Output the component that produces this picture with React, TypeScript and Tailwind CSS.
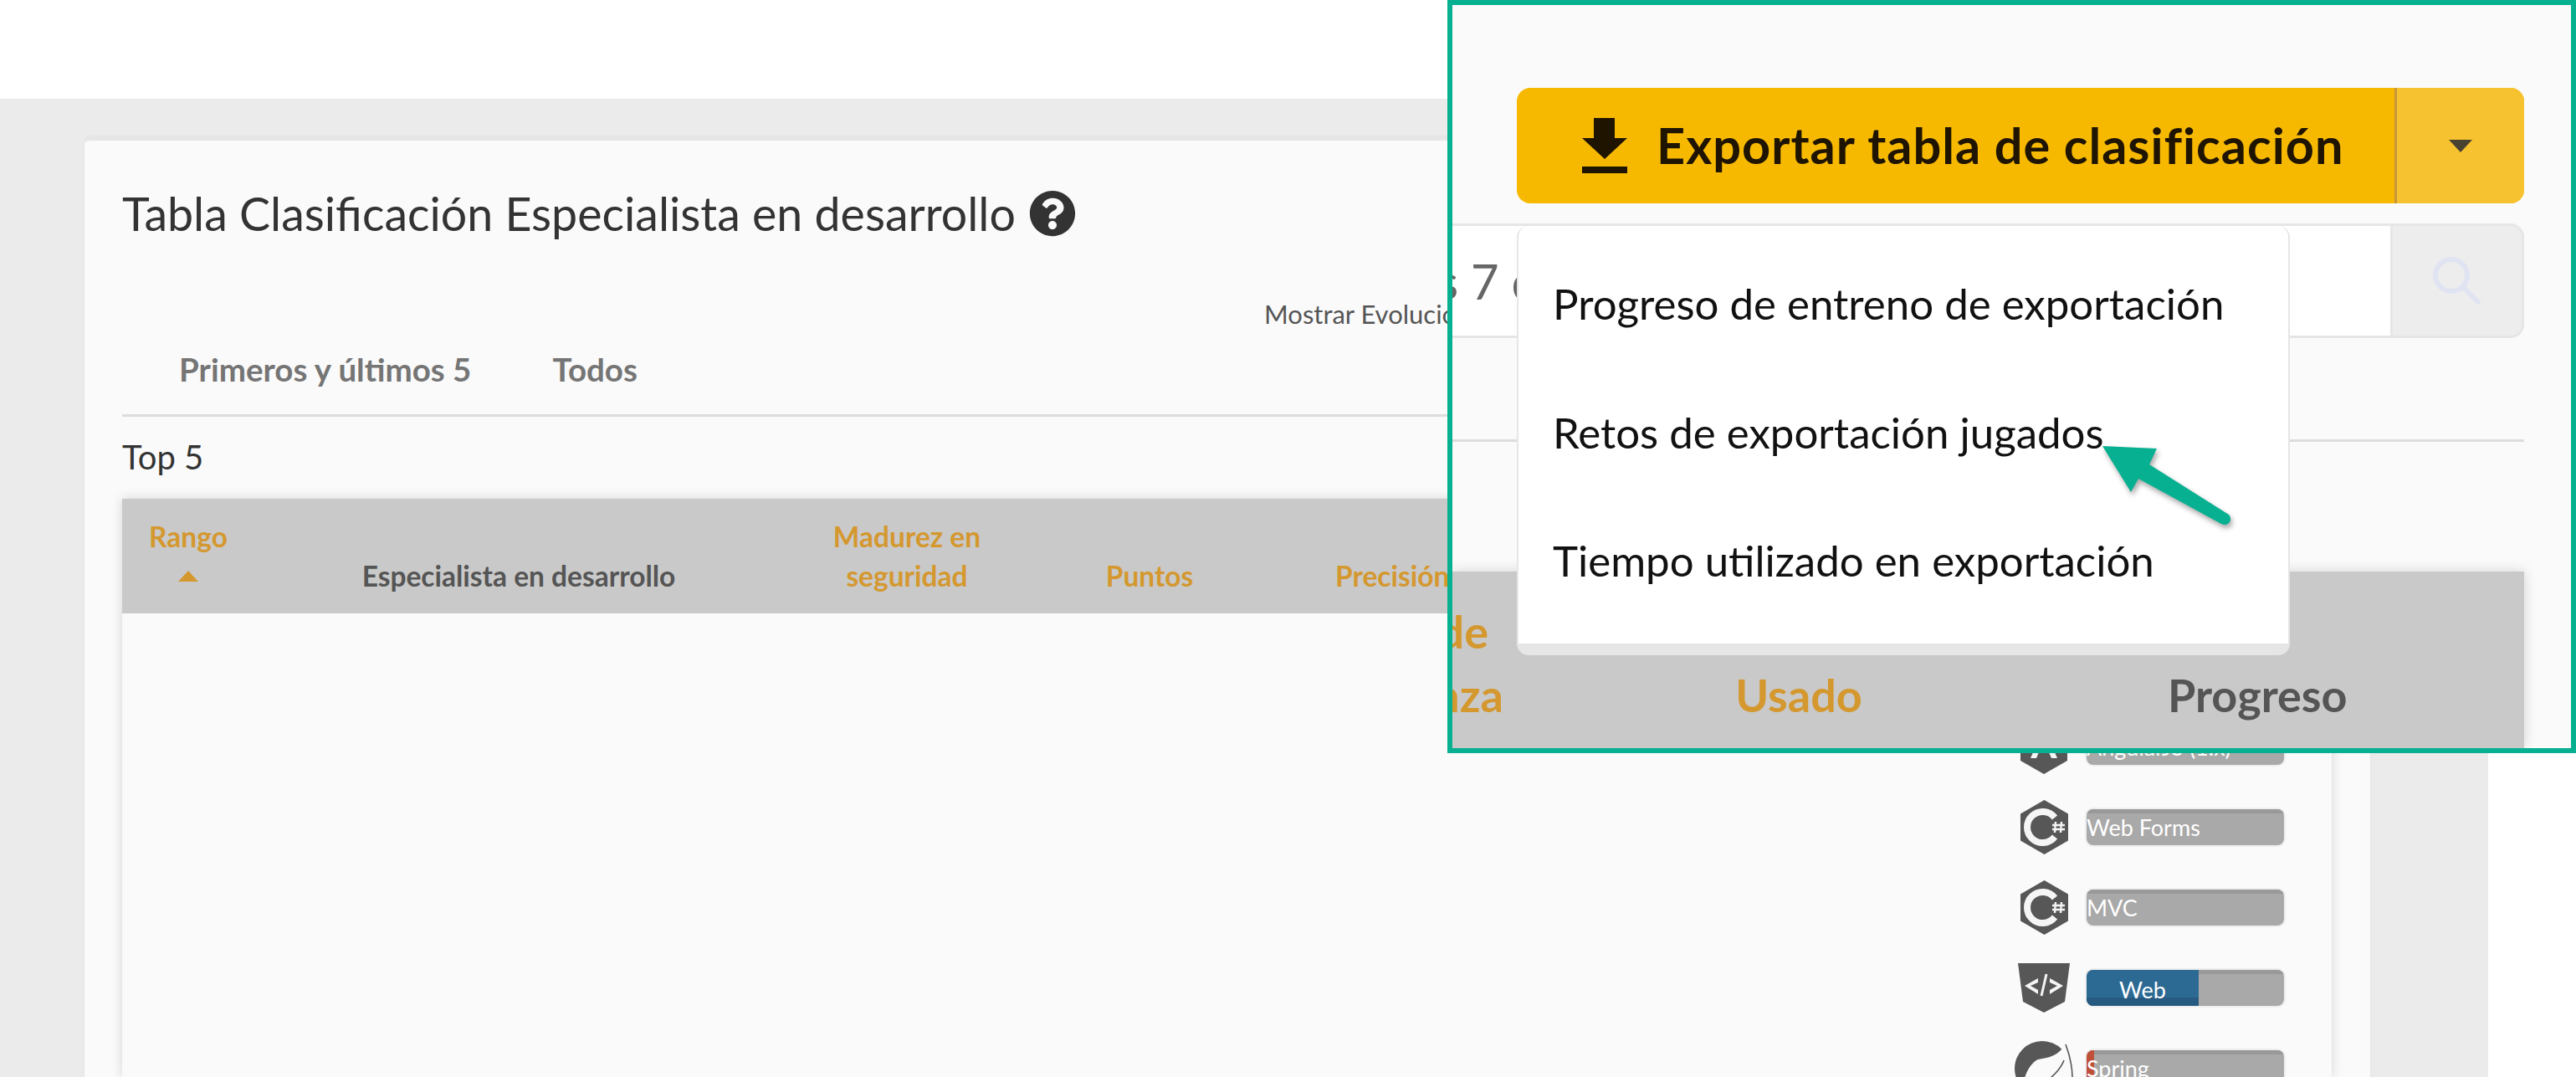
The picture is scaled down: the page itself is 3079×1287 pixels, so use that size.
import React from 'react';
import { FaQuestionCircle } from 'react-icons/fa';

const skills = [
    { name: 'AngularJS (1.x)', icon: 'angular', done: 0 },
    { name: 'Web Forms', icon: 'csharp', done: 0 },
    { name: 'MVC', icon: 'csharp', done: 0 },
    { name: 'Web', icon: 'html', done: 134 },
    { name: 'Spring', icon: 'spring', done: 9 },
];

const SkillIcon = ({ kind }: { kind: string }) => {
    if (kind === 'html') {
        return (
            <svg viewBox="0 0 62 60" className="h-[60px] w-[62px]">
                <path d="M0 0H62L56 46L31 59L6 46Z" fill="#575757" />
                <path d="M8 27L24 18V23L15 27L24 32V37ZM54 27L38 18V23L47 27L38 32V37Z" fill="#f5f5f5" />
                <path d="M34 13L28 39" fill="none" stroke="#f5f5f5" strokeWidth="3" />
            </svg>
        );
    }
    if (kind === 'spring') {
        return (
            <svg viewBox="0 0 70 68" className="h-[68px] w-[70px]">
                <circle cx="33" cy="34" r="33" fill="#575757" />
                <path d="M8 70C9 50 14 32 26 24C34 20 48 24 61 5C71 30 70 60 50 70Z" fill="#fafafa" />
                <path d="M61 5C66 18 69 32 69 46" fill="none" stroke="#575757" strokeWidth="1.6" />
                <path d="M59 24C56 32 50 39 43 45" fill="none" stroke="#575757" strokeWidth="1.6" />
            </svg>
        );
    }
    if (kind === 'angular') {
        return (
            <svg viewBox="0 0 56 65" className="h-[65px] w-[56px]">
                <path d="M28 0L56 16V49L28 65L0 49V16Z" fill="#575757" />
                <path d="M28 9L12 46H19L28 25L37 46H44Z" fill="#f5f5f5" />
            </svg>
        );
    }
    return (
        <svg viewBox="0 0 57 65" className="h-[65px] w-[57px]">
            <path d="M28.5 0L57 16.5V48.5L28.5 65L0 48.5V16.5Z" fill="#575757" />
            <path d="M41 21A18.5 18.5 0 1 0 41 44" fill="none" stroke="#f5f5f5" strokeWidth="8" />
            <path d="M42 26L41 39M49 26L48 39M38 30H53M38 35H53" fill="none" stroke="#f5f5f5" strokeWidth="2.4" />
        </svg>
    );
};

const SkillRow = ({ name, icon, done }: { name: string; icon: string; done: number }) => (
    <div className="flex h-[47px] items-center justify-end pr-[55px]">
        <div className="mr-[14px] flex w-[70px] justify-center">
            <SkillIcon kind={icon} />
        </div>
        <div className="relative h-[47px] w-[240px] overflow-hidden rounded-[10px] border-2 border-[#eeeeee] bg-[#a9a9a9]">
            <div className="h-[5px] bg-[#999999]" />
            {done > 100 && (
                <div className="absolute top-0 left-0 h-full w-[134px] bg-[#2c6a94]">
                    <div className="absolute bottom-0 left-0 h-[10px] w-full bg-[#265a80]" />
                    <div className="absolute inset-0 flex items-center justify-center pt-[5px] text-[27px] text-white">{name}</div>
                </div>
            )}
            {done > 0 && done < 100 && <div className="absolute top-0 left-0 h-full w-[9px] bg-[#c0503a]" />}
            {done < 100 && (
                <span className="absolute top-[4px] left-0 text-[27px] leading-[36px] whitespace-nowrap text-white">{name}</span>
            )}
        </div>
    </div>
);

const App = () => {
    return (
        <div className="relative h-[1287px] w-[3079px] overflow-hidden bg-white font-['Lato',sans-serif]">
            <div className="mt-[118px] inline-block h-[1169px] w-[2974px] bg-[#ebebeb] pt-[45px] pr-[141px] pl-[101px] align-top">
                <div className="flex h-full flex-col rounded-t-lg border-t-[5px] border-[#e6e6e6] bg-[#fafafa] pr-[46px] pl-[45px] shadow-[0_0_3px_#dddddd]">
                    <div className="mt-[57px] flex h-[60px] items-center text-[55.5px] text-[#333333]">
                        <span className="whitespace-nowrap">Tabla Clasificación Especialista en desarrollo</span>
                        <FaQuestionCircle className="ml-[16px] h-[56px] w-[56px] text-[#333333]" />
                    </div>

                    <div className="mt-[70px] pl-[1365px] text-[31px] leading-[40px] text-[#555555]">Mostrar Evolución</div>

                    <div className="mt-[25px] flex h-[44px] items-center pl-[68px] text-[38.5px] font-bold text-[#757575]">
                        <span>Primeros y últimos 5</span>
                        <span className="ml-[97px]">Todos</span>
                    </div>
                    <div className="mt-[31px] h-[3px] bg-[#dddddd]" />

                    <div className="mt-[28px] text-[40px] leading-[40px] text-[#333333]">Top 5</div>

                    <div className="mt-[30px] flex min-h-0 flex-1 flex-col shadow-[0_0_12px_#d4d4d4]">
                        <div className="grid h-[137px] shrink-0 grid-cols-[158px_632px_296px_284px_1fr] items-end bg-[#c9c9c9] pb-[21px] text-center text-[33.5px] leading-[47px] font-bold text-[#d4982f]">
                            <div>
                                <div>Rango</div>
                                <div className="flex h-[47px] items-center justify-center">
                                    <div className="h-0 w-0 border-x-[12px] border-b-[13px] border-x-transparent border-b-[#d4982f]" />
                                </div>
                            </div>
                            <div className="text-[#555555]">Especialista en desarrollo</div>
                            <div>
                                <div>Madurez en</div>
                                <div>seguridad</div>
                            </div>
                            <div>Puntos</div>
                            <div className="pl-[80px] text-left">Precisión</div>
                        </div>
                        <div className="flex min-h-0 flex-1 flex-col gap-[49px] overflow-hidden pt-[136px]">
                            {skills.map((s) => (
                                <SkillRow key={s.name} name={s.name} icon={s.icon} done={s.done} />
                            ))}
                        </div>
                    </div>
                </div>
            </div>

            {/* zoomed callout over the page */}
            <div className="absolute top-0 right-0 h-[900px] w-[1349px] overflow-hidden border-[6px] border-[#07b091] bg-[#fafafa] pt-[99px] pr-[56px] pl-[77px]">
                <div className="flex h-[138px] rounded-[16px] bg-[#f7b900]">
                    <div className="flex flex-1 items-center pl-[78px]">
                        <svg viewBox="0 0 54 66" className="h-[66px] w-[54px] shrink-0">
                            <path d="M14 0H39V24H54L27 49L0 24H14Z" fill="#1e1400" />
                            <rect x="0" y="58" width="54" height="8" fill="#1e1400" />
                        </svg>
                        <span className="ml-[35px] text-[59.5px] font-bold tracking-[1px] whitespace-nowrap text-[#1e1400]">
                            Exportar tabla de clasificación
                        </span>
                    </div>
                    <div className="flex w-[155px] items-center justify-center rounded-r-[16px] border-l-[3px] border-[#c8963a] bg-[#f6c22f]">
                        <div className="h-0 w-0 border-x-[14px] border-t-[15px] border-x-transparent border-t-[#4a4230]" />
                    </div>
                </div>

                <div className="mt-[24px] -ml-[77px] flex h-[137px]">
                    <div className="flex flex-1 items-center overflow-hidden border-y-[3px] border-[#e6e6e6] bg-white">
                        <span className="-ml-[190px] text-[58px] whitespace-nowrap text-[#666666]">Últimos 7 días</span>
                    </div>
                    <div className="flex w-[160px] items-center justify-center rounded-r-[16px] border-[3px] border-[#e6e6e6] bg-[#ededed]">
                        <svg viewBox="0 0 60 60" className="h-[60px] w-[60px]">
                            <circle cx="23" cy="23" r="19" fill="none" stroke="#e0e4f2" strokeWidth="6" />
                            <path d="M37 37L55 55" fill="none" stroke="#e0e4f2" strokeWidth="6" strokeLinecap="round" />
                        </svg>
                    </div>
                </div>

                <div className="mt-[121px] -ml-[77px] h-[3px] bg-[#dddddd]" />

                <div className="relative mt-[155px] -ml-[77px] h-[211px] bg-[#c9c9c9] text-[54px] leading-[76px] font-bold text-[#d4982f] shadow-[0_0_14px_#d4d4d4]">
                    <div className="grid h-full grid-cols-[61px_706px_1fr] items-end pb-[25px] text-center">
                        <div className="flex flex-col items-end">
                            <div className="mr-[18px]">de</div>
                            <div>nza</div>
                        </div>
                        <div>Usado</div>
                        <div className="pl-[88px] text-left text-[#555555]">Progreso</div>
                    </div>
                </div>

                <div className="absolute top-[264px] left-[77px] h-[513px] w-[924px] rounded-[14px] border-x-2 border-b-[14px] border-[#e6e6e6] bg-white pt-[17px] pl-[41px] text-[51px] text-[#111111]">
                    <div className="flex h-[153px] items-center">Progreso de entreno de exportación</div>
                    <div className="flex h-[154px] items-center">Retos de exportación jugados</div>
                    <div className="flex h-[153px] items-center">Tiempo utilizado en exportación</div>
                </div>

                <svg viewBox="0 0 170 110" className="absolute top-[525px] left-[771px] h-[110px] w-[170px] drop-shadow-[2px_4px_3px_rgba(0,0,0,0.35)]">
                    <path d="M6 2L71 5L62 24L157 84C163 91 155 99 148 95L49 41L40 57Z" fill="#07b091" />
                </svg>
            </div>
        </div>
    );
};

export default App;
